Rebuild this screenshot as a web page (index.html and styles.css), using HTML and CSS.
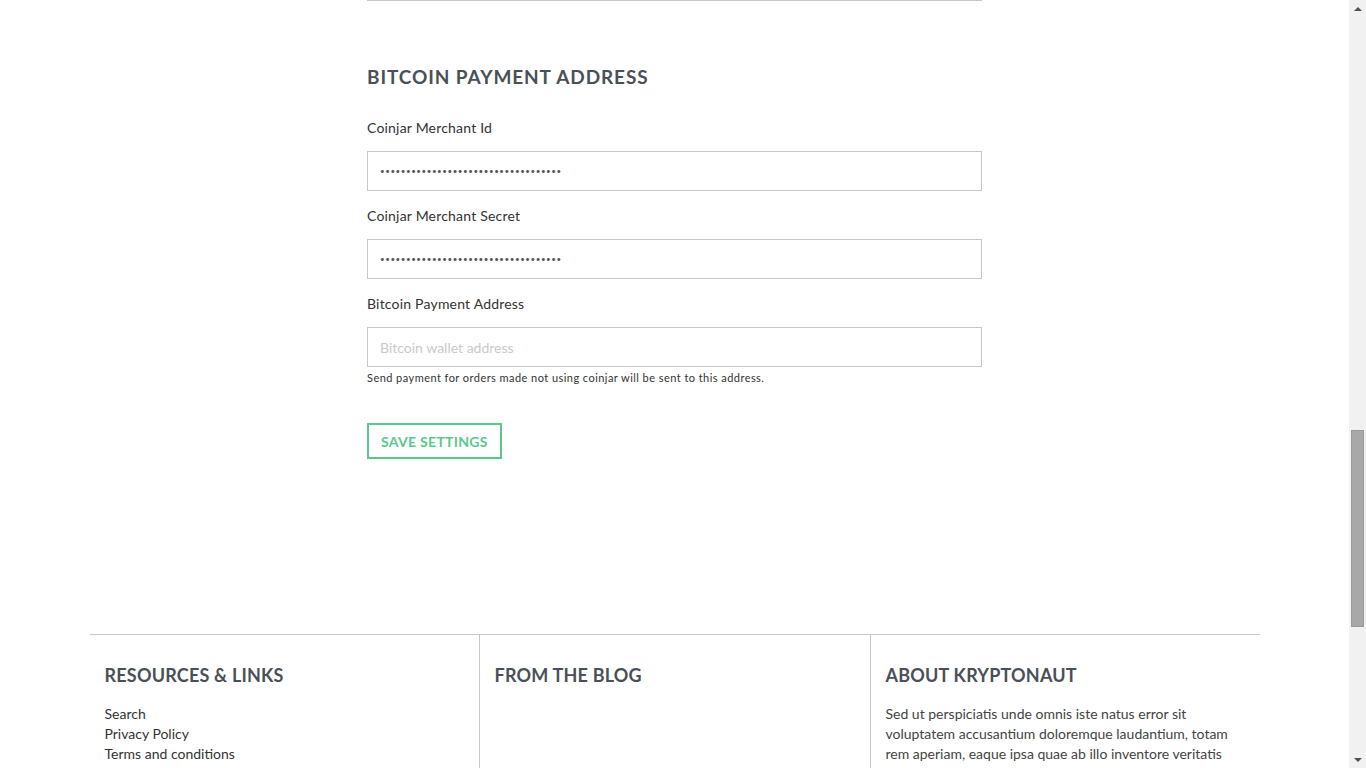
FILE: index.html
```html
<!DOCTYPE html>
<html lang="en">
<head>
<meta charset="utf-8">
<title>Settings</title>
<link rel="stylesheet" href="styles.css">
</head>
<body>
<div class="viewport">
  <div class="page">
    <section class="settings">
      <h2 class="section-title">BITCOIN PAYMENT ADDRESS</h2>
      <div class="field">
        <label class="field-label">Coinjar Merchant Id</label>
        <input class="field-input" type="password" value="abcdefghijabcdefghijabcdefghijabcde">
      </div>
      <div class="field">
        <label class="field-label">Coinjar Merchant Secret</label>
        <input class="field-input" type="password" value="abcdefghijabcdefghijabcdefghijabcde">
      </div>
      <div class="field">
        <label class="field-label">Bitcoin Payment Address</label>
        <input class="field-input" type="text" placeholder="Bitcoin wallet address">
        <p class="field-help">Send payment for orders made not using coinjar will be sent to this address.</p>
      </div>
      <button class="btn-save" type="button">SAVE SETTINGS</button>
    </section>
    <footer class="footer">
      <div class="footer-col">
        <h3 class="footer-title">RESOURCES &amp; LINKS</h3>
        <ul class="footer-links">
          <li><a href="#">Search</a></li>
          <li><a href="#">Privacy Policy</a></li>
          <li><a href="#">Terms and conditions</a></li>
        </ul>
      </div>
      <div class="footer-col">
        <h3 class="footer-title">FROM THE BLOG</h3>
      </div>
      <div class="footer-col">
        <h3 class="footer-title">ABOUT KRYPTONAUT</h3>
        <p class="footer-text">Sed ut perspiciatis unde omnis iste natus error sit voluptatem accusantium doloremque laudantium, totam rem aperiam, eaque ipsa quae ab illo inventore veritatis et quasi architecto beatae vitae dicta sunt explicabo.</p>
      </div>
    </footer>
  </div>
  <div class="scrollbar">
    <div class="sb-arrow sb-up"></div>
    <div class="sb-track">
      <div class="sb-space-top"></div>
      <div class="sb-thumb"></div>
    </div>
    <div class="sb-arrow sb-down"></div>
  </div>
</div>
</body>
</html>
```
FILE: styles.css
```css
html, body {
  margin: 0;
  padding: 0;
  height: 100%;
  overflow: hidden;
  background: #fff;
}
body {
  font-family: Lato, "Open Sans", sans-serif;
  color: #333;
}
.viewport {
  display: flex;
  height: 768px;
}
.page {
  flex: 1;
  overflow: hidden;
  display: flex;
  flex-direction: column;
  align-items: center;
}
.settings {
  width: 615px;
  border-top: 1px solid #c5c9cd;
  display: flex;
  flex-direction: column;
  align-items: flex-start;
}
.section-title {
  margin: 64px 0 0;
  font-size: 19px;
  line-height: 24px;
  font-weight: 700;
  color: #4a5057;
  letter-spacing: 0.9px;
}
.field {
  width: 100%;
  display: flex;
  flex-direction: column;
}
.field:first-of-type { margin-top: 29px; }
.field + .field { margin-top: 15px; }
.field-label {
  font-size: 14px;
  line-height: 20px;
  color: #333;
  letter-spacing: 0.2px;
  margin-bottom: 13px;
}
.field-input {
  box-sizing: border-box;
  width: 100%;
  height: 40px;
  border: 1px solid #c6c9cc;
  border-radius: 0;
  padding: 0 12px;
  font-family: Lato, "Open Sans", sans-serif;
  font-size: 14px;
  color: #444;
  outline: none;
  background: #fff;
}
.field-input[type="password"] {
  font-size: 8px;
  letter-spacing: 0.55px;
  color: #555;
}
.field-input::placeholder {
  color: #c8cacc;
}
.field-help {
  margin: 4px 0 0;
  font-size: 11px;
  line-height: 14px;
  letter-spacing: 0.45px;
  color: #333;
}
.btn-save {
  margin-top: 38px;
  box-sizing: border-box;
  height: 36px;
  padding: 0 12px;
  border: 2px solid #59c98b;
  background: #fff;
  color: #59c98b;
  font-family: Lato, "Open Sans", sans-serif;
  font-weight: 700;
  font-size: 14px;
  letter-spacing: 0.3px;
  cursor: pointer;
}
.footer {
  margin-top: 175px;
  width: 1170px;
  border-top: 1px solid #c5c9cd;
  display: grid;
  grid-template-columns: 390px 390px 390px;
  flex: 1;
}
.footer-col {
  padding: 28px 15px 0;
}
.footer-col:first-child {
  border-right: 1px solid #c5c9cd;
}
.footer-col:last-child {
  border-left: 1px solid #c5c9cd;
}
.footer-title {
  margin: 0;
  font-size: 18px;
  line-height: 24px;
  font-weight: 700;
  color: #4a5057;
  letter-spacing: 0.2px;
}
.footer-links {
  list-style: none;
  margin: 17px 0 0;
  padding: 0;
}
.footer-links li {
  font-size: 14px;
  line-height: 20px;
}
.footer-links a {
  color: #333;
  text-decoration: none;
}
.footer-text {
  margin: 17px 0 0;
  max-width: 348px;
  font-size: 14px;
  line-height: 20px;
  color: #444;
}
.scrollbar {
  width: 17px;
  background: #f1f1f1;
  display: flex;
  flex-direction: column;
}
.sb-arrow {
  height: 17px;
  display: flex;
  align-items: center;
  justify-content: center;
}
.sb-up::before {
  content: "";
  border-left: 4px solid transparent;
  border-right: 4px solid transparent;
  border-bottom: 4px solid #505050;
}
.sb-down::before {
  content: "";
  border-left: 4px solid transparent;
  border-right: 4px solid transparent;
  border-top: 4px solid #505050;
}
.sb-track {
  flex: 1;
  display: flex;
  flex-direction: column;
  align-items: center;
}
.sb-space-top {
  height: 413px;
}
.sb-thumb {
  width: 13px;
  height: 197px;
  box-sizing: border-box;
  background: #a8a8a8;
  border: 1px solid #9a9a9a;
}
```
